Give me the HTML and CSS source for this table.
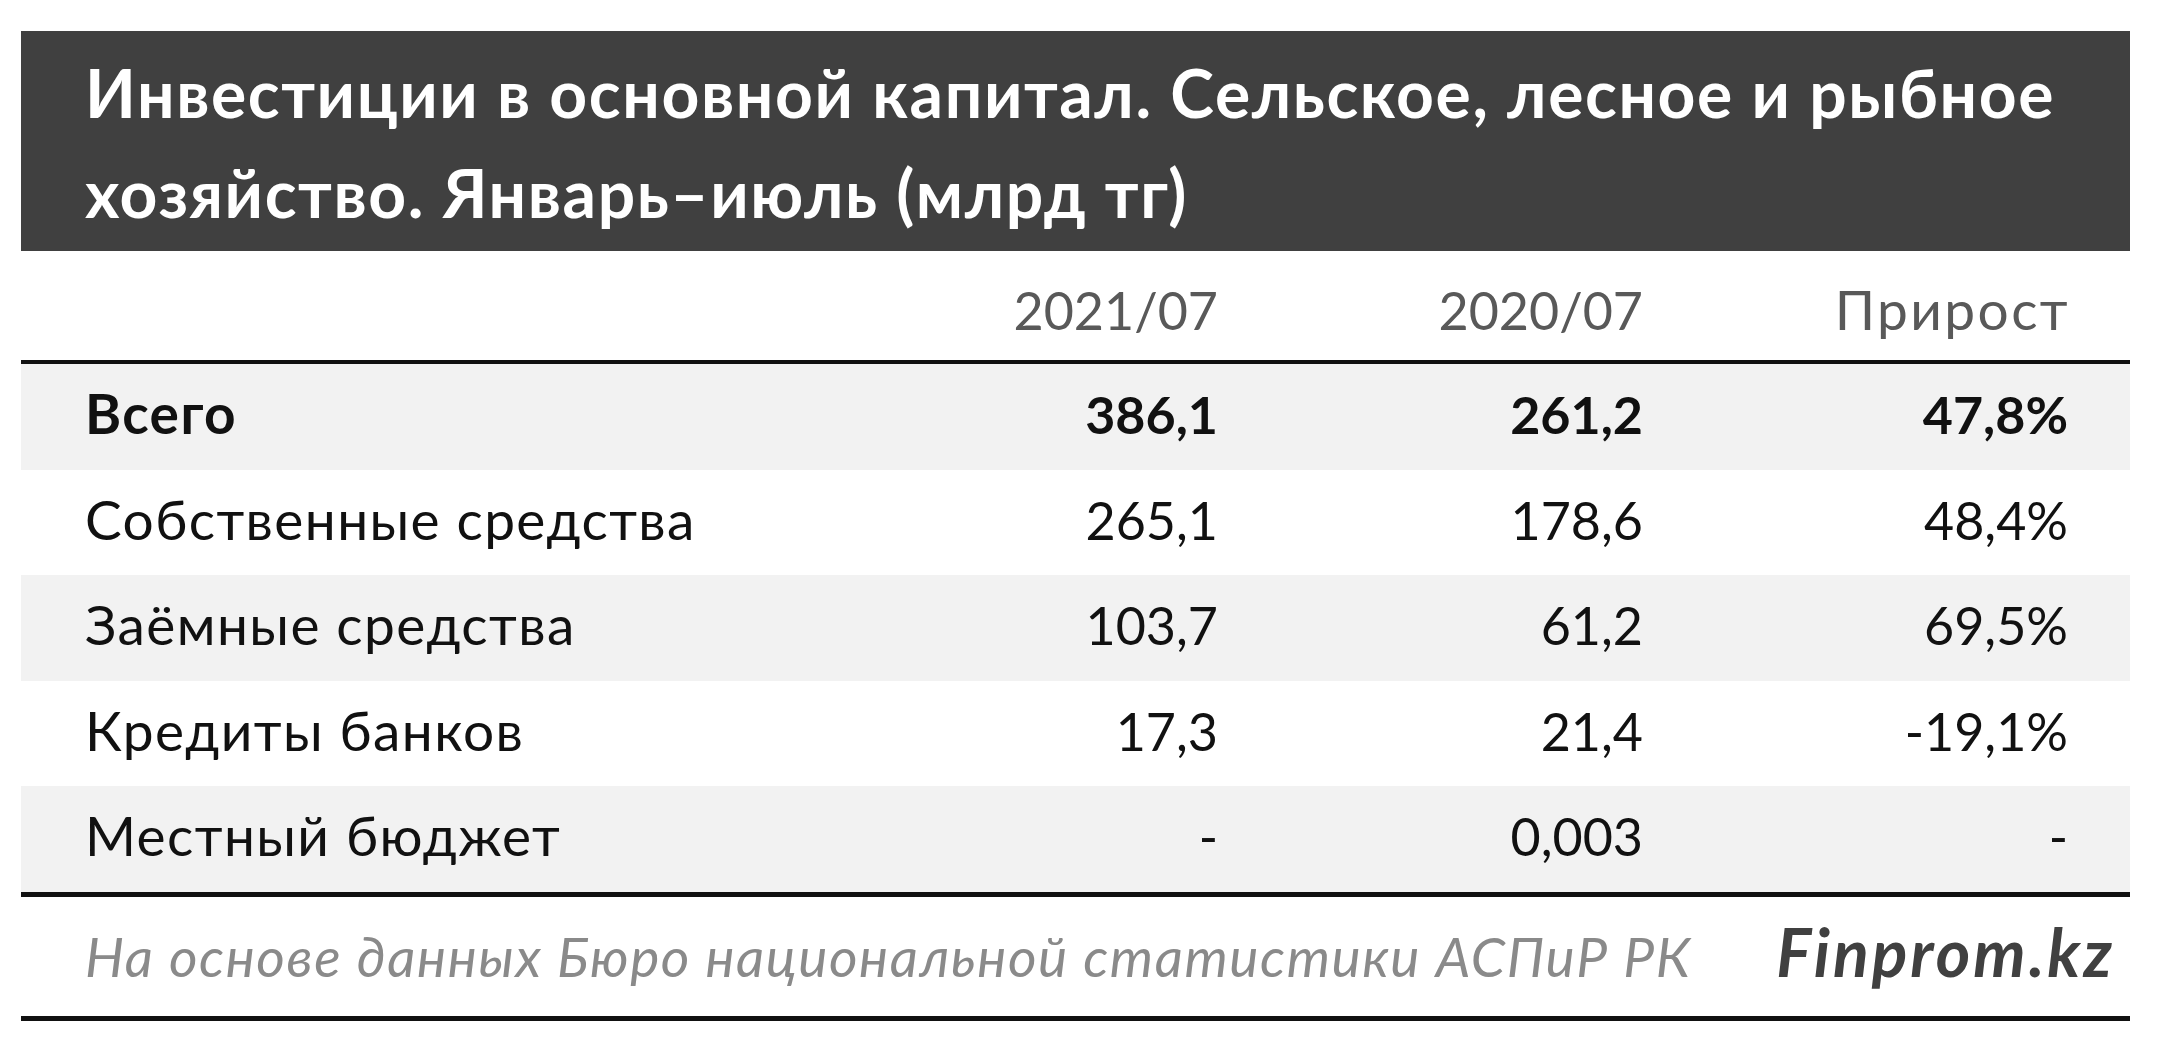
FILE: index.html
```html
<!DOCTYPE html>
<html lang="ru">
<head>
<meta charset="utf-8">
<title>Инвестиции в основной капитал</title>
<link rel="stylesheet" href="styles.css">
</head>
<body>
<div class="card">
  <div class="title">Инвестиции в основной капитал. Сельское, лесное и рыбное<br>хозяйство. Январь–июль (млрд тг)</div>
  <div class="table">
    <div class="row head">
      <span class="label"></span>
      <span class="num">2021/07</span>
      <span class="num">2020/07</span>
      <span class="num word">Прирост</span>
    </div>
    <div class="row shade bold">
      <span class="label">Всего</span>
      <span class="num">386,1</span>
      <span class="num">261,2</span>
      <span class="num">47,8%</span>
    </div>
    <div class="row">
      <span class="label">Собственные средства</span>
      <span class="num">265,1</span>
      <span class="num">178,6</span>
      <span class="num">48,4%</span>
    </div>
    <div class="row shade">
      <span class="label">Заёмные средства</span>
      <span class="num">103,7</span>
      <span class="num">61,2</span>
      <span class="num">69,5%</span>
    </div>
    <div class="row">
      <span class="label">Кредиты банков</span>
      <span class="num">17,3</span>
      <span class="num">21,4</span>
      <span class="num">-19,1%</span>
    </div>
    <div class="row shade">
      <span class="label">Местный бюджет</span>
      <span class="num">-</span>
      <span class="num">0,003</span>
      <span class="num">-</span>
    </div>
  </div>
  <div class="foot">
    <span class="source">На основе данных Бюро национальной статистики АСПиР РК</span>
    <span class="brand">Finprom.kz</span>
  </div>
</div>
</body>
</html>
```

FILE: styles.css
```css
html, body {
  margin: 0;
  padding: 0;
  background: #ffffff;
}

body {
  font-family: Lato, "Open Sans", "Noto Sans", sans-serif;
}

.card {
  width: 2109px;
  margin: 31px 0 0 21px;
}

.title {
  background: #404040;
  color: #ffffff;
  font-weight: 700;
  font-size: 66px;
  letter-spacing: 1.6px;
  line-height: 100px;
  padding: 12px 0 8px 64px;
}

.table {
  border-bottom: 5px solid #111111;
}

.row {
  display: grid;
  grid-template-columns: 1fr 425px 425px 425px;
  align-items: baseline;
  padding: 19px 62px 25.6px 64px;
  line-height: 60px;
  color: #111111;
}

.label {
  font-size: 55px;
  letter-spacing: 1.4px;
}

.num {
  text-align: right;
  font-size: 52px;
}

.num.word {
  font-size: 55px;
  letter-spacing: 2.4px;
  margin-right: -2px;
}

.row.head {
  padding: 28px 62px 20px 64px;
  color: #595959;
  border-bottom: 4px solid #111111;
}

.row.shade {
  background: #f2f2f2;
}

.row.bold {
  font-weight: 700;
}

.foot {
  box-sizing: border-box;
  height: 124px;
  display: flex;
  justify-content: space-between;
  align-items: baseline;
  padding: 18px 15px 0 64px;
  border-bottom: 5px solid #111111;
}

.source {
  font-style: italic;
  font-size: 55px;
  letter-spacing: 1.6px;
  line-height: 60px;
  color: #8a8a8a;
}

.brand {
  font-style: italic;
  font-weight: 700;
  font-size: 66px;
  letter-spacing: 3px;
  line-height: 74px;
  color: #404040;
}
```
